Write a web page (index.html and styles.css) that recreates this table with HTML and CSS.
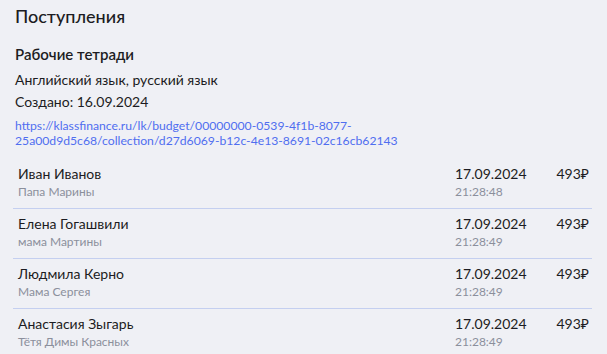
FILE: index.html
```html
<!DOCTYPE html>
<html lang="ru">
<head>
<meta charset="utf-8">
<link rel="stylesheet" href="styles.css">
</head>
<body>
<div class="page">
  <h1 class="title">Поступления</h1>
  <h2 class="subtitle">Рабочие тетради</h2>
  <p class="info first">Английский язык, русский язык</p>
  <p class="info">Создано: 16.09.2024</p>
  <a class="link" href="#">https://klassfinance.ru/lk/budget/00000000-0539-4f1b-8077-<br>25a00d9d5c68/collection/d27d6069-b12c-4e13-8691-02c16cb62143</a>
  <div class="list">
    <div class="row">
      <div class="who"><div class="name">Иван Иванов</div><div class="note">Папа Марины</div></div>
      <div class="when"><div class="date">17.09.2024</div><div class="time">21:28:48</div></div>
      <div class="sum">493₽</div>
    </div>
    <div class="row">
      <div class="who"><div class="name">Елена Гогашвили</div><div class="note">мама Мартины</div></div>
      <div class="when"><div class="date">17.09.2024</div><div class="time">21:28:49</div></div>
      <div class="sum">493₽</div>
    </div>
    <div class="row">
      <div class="who"><div class="name">Людмила Керно</div><div class="note">Мама Сергея</div></div>
      <div class="when"><div class="date">17.09.2024</div><div class="time">21:28:49</div></div>
      <div class="sum">493₽</div>
    </div>
    <div class="row">
      <div class="who"><div class="name">Анастасия Зыгарь</div><div class="note">Тётя Димы Красных</div></div>
      <div class="when"><div class="date">17.09.2024</div><div class="time">21:28:49</div></div>
      <div class="sum">493₽</div>
    </div>
  </div>
</div>
</body>
</html>
```
FILE: styles.css
```css
html, body {
  margin: 0;
  padding: 0;
  background: #eff0f5;
}
body {
  font-family: "Lato", "Noto Sans", sans-serif;
  color: #1c1c22;
}
.page {
  padding: 4px 15px 0 15px;
  width: 577px;
}
.title {
  margin: 0;
  font-size: 18px;
  font-weight: 500;
  line-height: 24px;
}
.subtitle {
  margin: 16px 0 0 0;
  font-size: 15px;
  font-weight: 600;
  line-height: 20px;
}
.info {
  margin: 4px 0 0 0;
  font-size: 14px;
  line-height: 18px;
}
.info.first {
  margin-top: 7px;
}
.link {
  display: block;
  margin-top: 6.5px;
  font-size: 12.2px;
  line-height: 15px;
  color: #4f6ef0;
  text-decoration: none;
}
.list {
  margin-top: 11px;
}
.row {
  display: flex;
  align-items: flex-start;
  padding: 6px 3px 8px 5px;
  border-bottom: 1px solid #c4cff0;
  margin-left: -2px;
}
.row:last-child {
  border-bottom: none;
}
.who {
  flex: 1;
}
.name, .date, .sum {
  font-size: 14px;
  line-height: 18px;
}
.note, .time {
  font-size: 12px;
  line-height: 17px;
  color: #8b8f9c;
}
.when {
  width: 94px;
}
.sum {
  width: 40px;
  text-align: right;
}
```
